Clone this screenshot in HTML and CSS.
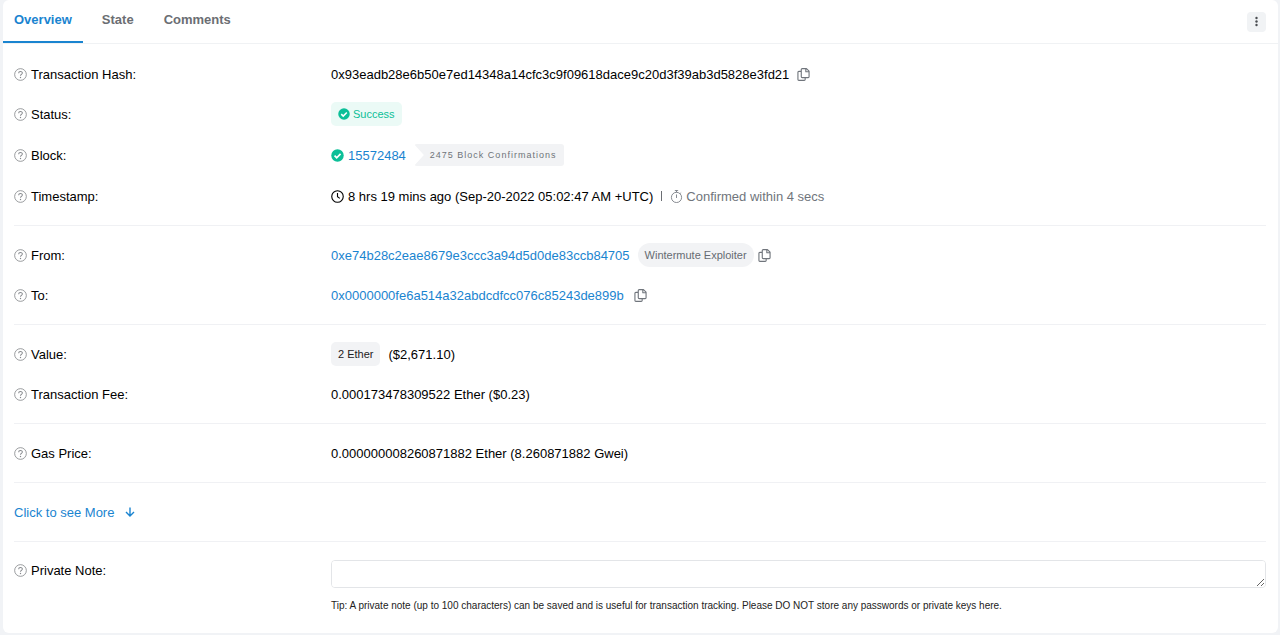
FILE: index.html
```html
<!DOCTYPE html>
<html lang="en">
<head>
<meta charset="utf-8">
<title>Transaction Details</title>
<link rel="stylesheet" href="styles.css">
</head>
<body>
<svg class="sprite" aria-hidden="true">
  <symbol id="help" viewBox="0 0 14 14"><circle cx="7" cy="7" r="6.3" fill="none" stroke="currentColor" stroke-width=".9"/><path d="M5 5.6C5 3.2 9 3.2 9 5.5C9 6.9 7 6.8 7 8.3" fill="none" stroke="currentColor" stroke-width="1.1"/><circle cx="7" cy="10.2" r=".75" fill="currentColor"/></symbol>
  <symbol id="copy" viewBox="0 0 14 14"><path d="M5.6.7h4.6L13 3.4V9.4Q13 10.4 12 10.4H5.6Q4.6 10.4 4.6 9.4V1.7Q4.6.7 5.6.7ZM9.5.7V4H13M4.4 3.6H2Q1 3.6 1 4.6V12.3Q1 13.3 2 13.3H7.8Q8.8 13.3 8.8 12.3V10.6" fill="none" stroke="currentColor" stroke-width="1.2" stroke-linejoin="round"/></symbol>
  <symbol id="check" viewBox="0 0 14 14"><circle cx="7" cy="7" r="6.7" fill="currentColor"/><path d="M3.8 7.2L6.1 9.4L10.3 5.2" fill="none" stroke="#fff" stroke-width="1.8"/></symbol>
  <symbol id="clock" viewBox="0 0 14 14"><circle cx="7" cy="7" r="6.2" fill="none" stroke="currentColor" stroke-width="1.2"/><path d="M7 3.2V7.2L9.5 9" fill="none" stroke="currentColor" stroke-width="1.2"/></symbol>
  <symbol id="timer" viewBox="0 0 14 14"><circle cx="7" cy="8" r="5.5" fill="none" stroke="currentColor" stroke-width=".9"/><path d="M7 4.8V8.6M7 2.5V.6M5.2.6H8.8M11 3.8L12 2.8" fill="none" stroke="currentColor" stroke-width=".9"/></symbol>
</svg>
<main class="card">
  <header class="card-header">
    <nav class="tabs">
      <a class="tab tab-active" href="#overview">Overview</a>
      <a class="tab" href="#state">State</a>
      <a class="tab" href="#comments">Comments</a>
    </nav>
    <button class="menu" type="button" aria-label="More options"><svg width="3" height="11" viewBox="0 0 3 11" fill="currentColor"><circle cx="1.5" cy="2" r="1.2"/><circle cx="1.5" cy="5.5" r="1.2"/><circle cx="1.5" cy="9" r="1.2"/></svg></button>
  </header>
  <div class="card-body" id="overview">
    <section class="group">
      <div class="row"><div class="label"><svg class="icon muted"><use href="#help"/></svg>Transaction Hash:</div>
        <div class="value"><span>0x93eadb28e6b50e7ed14348a14cfc3c9f09618dace9c20d3f39ab3d5828e3fd21</span><button class="copy" type="button" aria-label="Copy transaction hash"><svg class="icon"><use href="#copy"/></svg></button></div></div>
      <div class="row"><div class="label"><svg class="icon muted"><use href="#help"/></svg>Status:</div>
        <div class="value"><span class="badge success"><svg class="icon-small"><use href="#check"/></svg>Success</span></div></div>
      <div class="row block-row"><div class="label"><svg class="icon muted"><use href="#help"/></svg>Block:</div>
        <div class="value"><svg class="icon green"><use href="#check"/></svg><a href="#block">15572484</a><span class="confirmations">2475 Block Confirmations</span></div></div>
      <div class="row"><div class="label"><svg class="icon muted"><use href="#help"/></svg>Timestamp:</div>
        <div class="value"><svg class="icon"><use href="#clock"/></svg><span>8 hrs 19 mins ago (Sep-20-2022 05:02:47 AM +UTC)</span><span class="divider"></span><span class="confirmed"><svg class="icon"><use href="#timer"/></svg>Confirmed within 4 secs</span></div></div>
    </section>
    <section class="group">
      <div class="row"><div class="label"><svg class="icon muted"><use href="#help"/></svg>From:</div>
        <div class="value"><a href="#from">0xe74b28c2eae8679e3ccc3a94d5d0de83ccb84705</a><span class="badge tag">Wintermute Exploiter</span><button class="copy copy-tight" type="button" aria-label="Copy sender address"><svg class="icon"><use href="#copy"/></svg></button></div></div>
      <div class="row"><div class="label"><svg class="icon muted"><use href="#help"/></svg>To:</div>
        <div class="value"><a href="#to">0x0000000fe6a514a32abdcdfcc076c85243de899b</a><button class="copy copy-wide" type="button" aria-label="Copy recipient address"><svg class="icon"><use href="#copy"/></svg></button></div></div>
    </section>
    <section class="group">
      <div class="row"><div class="label"><svg class="icon muted"><use href="#help"/></svg>Value:</div>
        <div class="value"><span class="badge amount">2 Ether</span><span>($2,671.10)</span></div></div>
      <div class="row"><div class="label"><svg class="icon muted"><use href="#help"/></svg>Transaction Fee:</div>
        <div class="value">0.000173478309522 Ether ($0.23)</div></div>
    </section>
    <section class="group">
      <div class="row"><div class="label"><svg class="icon muted"><use href="#help"/></svg>Gas Price:</div>
        <div class="value">0.000000008260871882 Ether (8.260871882 Gwei)</div></div>
    </section>
    <section class="group">
      <div class="row"><a class="more" href="#more">Click to see More<svg width="10" height="10" viewBox="0 0 10 10" fill="none" stroke="currentColor" stroke-width="1.4"><path d="M5 .5V9M1 5L5 9L9 5"/></svg></a></div>
    </section>
    <section class="group">
      <div class="row note-row"><label class="label" for="note"><svg class="icon muted"><use href="#help"/></svg>Private Note:</label>
        <div class="note"><textarea id="note" rows="1" maxlength="100"></textarea><p class="tip">Tip: A private note (up to 100 characters) can be saved and is useful for transaction tracking. Please DO NOT store any passwords or private keys here.</p></div></div>
    </section>
  </div>
</main>
</body>
</html>
```
FILE: styles.css
```css
* { box-sizing: border-box; }
body {
  margin: 0;
  padding: 0 2px 2px 3px;
  background: #f1f3f6;
  color: #000;
  font: 13px/21px "Liberation Sans", Arial, sans-serif;
}
.sprite { position: absolute; width: 0; height: 0; }
a { color: #1a84d0; text-decoration: none; }
button { border: 0; padding: 0; cursor: pointer; }
.card { background: #fff; border-radius: 6px; }
.card-header {
  display: flex;
  justify-content: space-between;
  align-items: center;
  height: 44px;
  padding-right: 12px;
  border-bottom: 1px solid #f0f2f4;
}
.tabs { display: flex; align-self: stretch; gap: 8px; }
.tab {
  padding: 9px 11px 0;
  color: #6b6e73;
  font-weight: bold;
}
.tab-active { color: #1a84d0; border-bottom: 2px solid #1a84d0; }
.menu {
  display: flex;
  align-items: center;
  justify-content: center;
  width: 19px;
  height: 20px;
  border-radius: 4px;
  background: #f1f3f5;
  color: #4a4d52;
}
.card-body { padding: 1px 12px 17px 11px; }
.group {
  display: grid;
  row-gap: 2px;
  padding: 10px 0;
  border-bottom: 1px solid #f0f1f4;
}
.group:last-child { border-bottom: 0; padding-bottom: 0; }
.row {
  display: grid;
  grid-template-columns: 25% 1fr;
  column-gap: 4px;
  align-items: center;
  min-height: 38px;
}
.block-row { min-height: 40px; }
.label, .value, .confirmed { display: flex; align-items: center; gap: 4px; }
.icon { width: 13px; height: 13px; flex: none; }
.icon-small { width: 12px; height: 12px; }
.muted { color: #85888c; }
.green { color: #0cbf98; }
.copy {
  display: flex;
  margin-left: 4px;
  background: none;
  color: #70757c;
}
.copy-tight { margin-left: 0; }
.copy-wide { margin-left: 6px; }
.badge {
  display: flex;
  align-items: center;
  gap: 3px;
  height: 24px;
  padding: 0 7px;
  border-radius: 5px;
  font-size: 11px;
}
.success { background: #ebfaf6; color: #0cbf98; }
.tag {
  margin-left: 4px;
  border-radius: 12px;
  background: #f2f3f5;
  color: #666b72;
}
.amount { margin-right: 4px; background: #f2f3f5; color: #1e2022; }
.confirmations {
  margin-left: 4px;
  padding: 0 8px 0 16px;
  border-radius: 3px;
  background: #f2f3f5;
  color: #6f7379;
  font-size: 9px;
  line-height: 22px;
  letter-spacing: 1px;
  clip-path: polygon(0 0, 100% 0, 100% 100%, 0 100%, 10px 50%);
}
.divider { width: 1px; height: 10px; margin: 0 4px; background: #6b6e73; }
.confirmed { gap: 3px; color: #70757c; }
.more { display: flex; align-items: center; gap: 11px; }
.note-row { align-items: start; }
.note-row .label { padding-top: 8px; }
.note { padding-top: 8px; }
textarea {
  display: block;
  width: 100%;
  height: 28px;
  padding: 4px 8px;
  border: 1px solid #e3e5e8;
  border-radius: 4px;
  font: inherit;
  resize: vertical;
}
.tip { margin: 7px 0 0; color: #222; font-size: 10px; }
```
